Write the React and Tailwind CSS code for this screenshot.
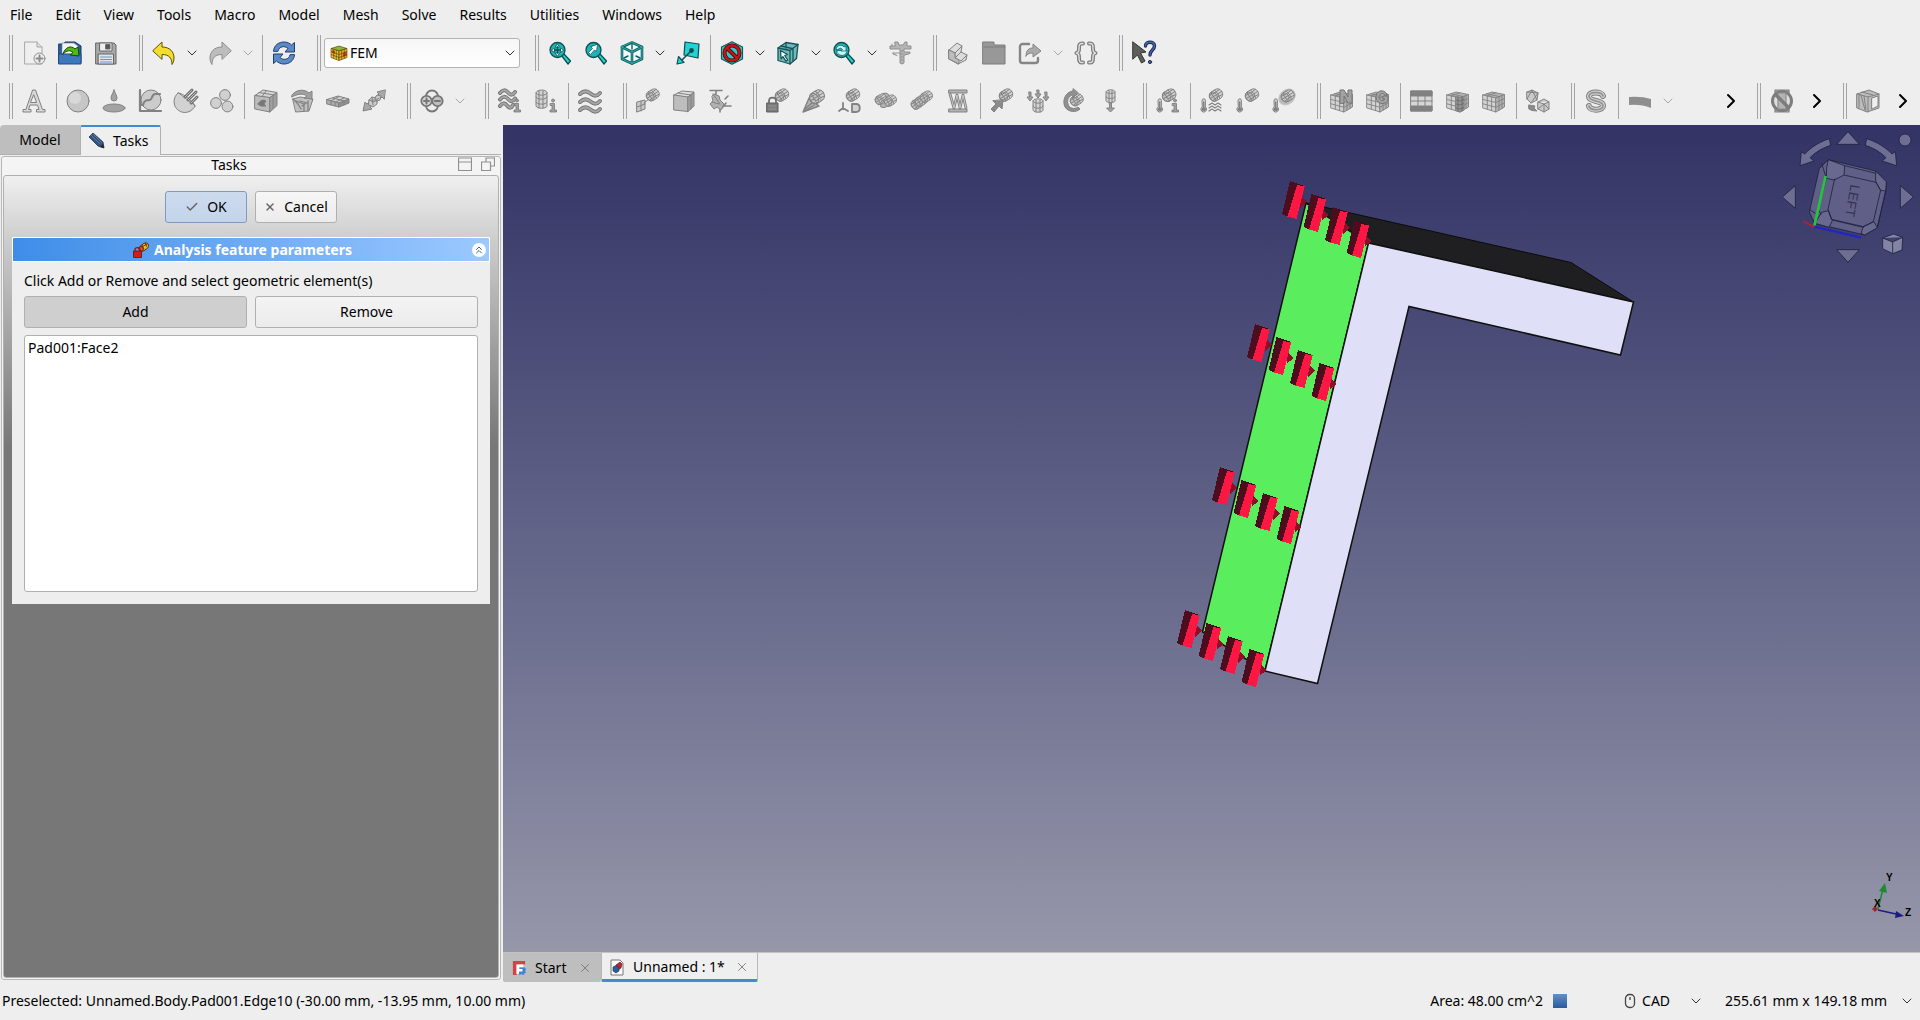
import React, { useState } from "react";
import { ChevronDown, ChevronRight, ChevronsUp, Check, X } from "lucide-react";

const menus = [
  "File",
  "Edit",
  "View",
  "Tools",
  "Macro",
  "Model",
  "Mesh",
  "Solve",
  "Results",
  "Utilities",
  "Windows",
  "Help",
];

const LINE = "#828282";
const LIGHT = "#d2d2d2";
const MID = "#b2b2b2";
const TEAL = "#0f4f50";
const CYAN = "#27cfcf";

const Icon = ({ children, stroke = LINE, fill = "none", width = 1 }) => (
  <svg
    viewBox="0 0 24 24"
    className="size-6 overflow-visible"
    stroke={stroke}
    fill={fill}
    strokeWidth={width}
    strokeLinejoin="round"
    strokeLinecap="round"
    aria-hidden="true"
  >
    {children}
  </svg>
);

/* ---------- shared icon parts ---------- */

// Tilted mesh cylinder used by most of the constraint icons
const Capsule = ({ at = "translate(0 0)", fill = LIGHT, line = LINE }) => (
  <g transform={at}>
    <g transform="rotate(-32 8 6)" stroke={line} strokeWidth="0.9">
      <rect x="1" y="1" width="14" height="10.5" rx="4.8" fill={fill} />
      <ellipse cx="5" cy="6.2" rx="3.8" ry="5" fill={MID} fillOpacity="0.5" />
      <path
        d="M1.500 6.200H14.800M5 1.200V11.200M9.500 1.200Q11.500 6 9.500 11.200M3 3.200Q9 4.200 14 3.200M3 9.200Q9 8.200 14 9.200"
        fill="none"
      />
    </g>
  </g>
);

const Thermometer = () => (
  <g stroke={LINE}>
    <path d="M2 11.500a1.700 1.700 0 0 1 3.400 0V18a2.800 2.800 0 1 1-3.400 0z" fill={LIGHT} />
    <circle cx="3.700" cy="20.200" r="1.600" fill={LINE} />
    <path d="M3.700 13v6" strokeWidth="1.400" />
  </g>
);

// The small "i" badge on the initial-condition icons
const InfoMark = () => (
  <g fill="#a0a0a0" stroke="#777777" strokeWidth="0.8">
    <circle cx="19" cy="11.500" r="1.500" />
    <path d="M16.500 14.500h4V21h2v2h-6.500v-2h2v-4.500h-1.500z" />
  </g>
);

const GridCube = ({ children }) => (
  <g stroke={LINE} strokeWidth="0.9">
    <path d="M1 6 10 3l12.500 2.500L14 9z" fill={MID} />
    <path d="M1 6 14 9v14L1 19z" fill={LIGHT} />
    <path d="M14 9l8.500-3.500V18L14 23z" fill={MID} />
    <path
      d="M1 10.500l13 3 8.500-4M1 14.800l13 3.500 8.500-4.500M5.300 7v13.200M9.600 8v13.600M17 7.800v13.400M20 6.500v13M5 4.700l12.500 3M14 3.700 5.500 7"
      fill="none"
    />
    {children}
  </g>
);

const Magnifier = ({ children }) => (
  <Icon stroke={TEAL} width={1.3}>
    <path d="M13.500 14.500l2-2 7 7.500-2.500 3z" fill={CYAN} />
    <circle cx="9.500" cy="9" r="7.500" fill="#1fb5b8" />
    {children}
  </Icon>
);

const Wave = ({ y, w = 21 }) => (
  <g>
    <path d={`M2 ${y}q${w / 4} -5 ${w / 2} -.5t${w / 2 - 1} -.5`} stroke="#777777" strokeWidth="4" />
    <path d={`M2 ${y}q${w / 4} -5 ${w / 2} -.5t${w / 2 - 1} -.5`} stroke="#a6a6a6" strokeWidth="2" />
  </g>
);

/* ---------- standard toolbar icons ---------- */

const NewIcon = () => (
  <Icon stroke="#a8a8a8">
    <path d="M3 1h12l5 5v17H3z" fill="#efefef" />
    <path d="M15 1v5h5" fill="#dcdcdc" />
    <circle cx="17.500" cy="17.500" r="5.500" fill="#ececec" stroke="#8c8c8c" />
    <path d="M17.500 14.500v6M14.500 17.500h6" stroke="#8c8c8c" strokeWidth="2" />
  </Icon>
);

const OpenIcon = () => (
  <Icon stroke="#173a68">
    <path d="M1 3h5l1-2h10l6 4v17H1z" fill="#275ea4" />
    <path d="M4 5V2h12l4 3v13H4z" fill="#f4f4f4" stroke="#777777" strokeWidth="0.6" />
    <path d="M1 13h22v10H1z" fill="#3d77bd" stroke="#204a87" />
    <path d="M5 13C7 6 13 4 17 8l3-2 1 9-9-1 3-2.500C12 9 9 9 5 13z" fill="#4fba10" stroke="#17450a" />
  </Icon>
);

const SaveIcon = () => (
  <Icon stroke="#666666">
    <path d="M2 2h18l2 2v19H2z" fill="#a9a9a9" />
    <path d="M6 2h12v8H6z" fill="#efefef" />
    <path d="M12 3.500h4V8h-4z" fill="#555555" />
    <path d="M4.500 13h15v10h-15z" fill="#dfe5ec" />
    <path d="M6.500 16h11M6.500 18.500h11M6.500 21h11" stroke="#6e94c4" />
  </Icon>
);

const UndoIcon = () => (
  <Icon stroke="#5c5200" fill="#f5dd2c">
    <path d="M1 9.500 10 1v5c8 0 12 5 12 11 0 3-1 5-2 6.500C20 17 17 13.500 10 13.500V18z" />
  </Icon>
);

const RedoIcon = () => (
  <Icon stroke="#8c8c8c" fill="#bdbdbd">
    <path d="M23 9.500 14 1v5C6 6 2 11 2 17c0 3 1 5 2 6.500C4 17 7 13.500 14 13.500V18z" />
  </Icon>
);

const RefreshIcon = () => (
  <Icon stroke="#1d3f70" fill="#5a8bc8">
    <path d="M1.500 10C2 4 7 1 12 1c3.500 0 6 1.500 7.500 3L22.500 1.500V11H13l3-3.500c-3-3-9-2.500-10 2.500z" />
    <path d="M22.500 14c-.5 6-5.500 9-10.500 9-3.500 0-6-1.500-7.500-3l-3 2.500V13H11l-3 3.500c3 3 9 2.500 10-2.500z" />
  </Icon>
);

const ZoomFitIcon = () => (
  <Magnifier>
    <path d="M9.500 3l2 3h-4zM9.500 15l2-3h-4zM3.500 9l3-2v4zM15.500 9l-3-2v4z" fill="#e8ffff" strokeWidth="0.7" />
    <path d="M9.500 6v6M6.500 9h6" />
  </Magnifier>
);

const ZoomSelectIcon = () => (
  <Magnifier>
    <path d="M13.500 3.500l-1 7-2-1.500-4 4.500-2-2 4-4-1.500-1.500z" fill="#ffffff" strokeWidth="0.7" />
  </Magnifier>
);

const ZoomRefreshIcon = () => (
  <Magnifier>
    <path d="M4 8c1-4 6-5 8-2l2-1v5h-5l1.500-1.500C9 6.500 7 7 6 8.500zM15 10c-1 5-6 5.500-8.500 3L5 14v-4.500h4" fill="#c8f6f6" strokeWidth="0.7" />
  </Magnifier>
);

const IsoIcon = () => (
  <Icon stroke="#0f5f61" width={2.6}>
    <path d="M12 1.500l10 4.500v12l-10 4.500L2 18V6z" fill="#f3fbfb" />
    <path d="M2 6l10 5 10-5M12 11v11.500" />
    <path d="M12 1.500l10 4.500v12l-10 4.500L2 18V6zM2 6l10 5 10-5M12 11v11.500" stroke="#2fb4b4" strokeWidth="0.9" />
    <path d="M12 3v5M4 17l4-2M20 17l-4-2" strokeWidth="1.400" />
  </Icon>
);

const AlignViewIcon = () => (
  <Icon stroke={TEAL} width={1.2}>
    <path d="M9 1l14 2-1 14-14-3z" fill="#22d3d3" />
    <path d="M16 9 6 19" strokeWidth="1.500" />
    <path d="M1 23l1.500-7.500L8 21.500z" fill={CYAN} />
    <circle cx="15.500" cy="9.500" r="1.800" fill={TEAL} />
  </Icon>
);

const NoSelectIcon = () => (
  <Icon stroke="#155a5c" width={1.2}>
    <path d="M12 0.800l10.500 5.200v12L12 23.200 1.500 18V6z" fill="#2fc9cb" />
    <circle cx="12" cy="12" r="7.500" stroke="#4a0a0a" strokeWidth="4" />
    <path d="M7 7l10 10" stroke="#4a0a0a" strokeWidth="4" />
    <circle cx="12" cy="12" r="7.500" stroke="#c81414" strokeWidth="2.400" />
    <path d="M7 7l10 10" stroke="#c81414" strokeWidth="2.400" />
  </Icon>
);

const BoxSelectIcon = () => (
  <Icon stroke="#175457" width={1.3}>
    <path d="M2 7l8-5.500 12 2-1.500 14L14 23 2 19.500z" fill="#6fb9bb" />
    <path d="M2 7l12 2.500L22 3.500M14 9.500V23M10 2v5M5 5l11 2.500M17 8v12" />
    <path d="M4.500 9.500l7 4-2.800 1 3 4.500-1.800 1.200-3-4.500-1.800 2z" fill="#ffffff" />
  </Icon>
);

const CaliperIcon = () => (
  <Icon fill="#b5b5b5" stroke="#909090">
    <path d="M7 1h3l1 3h4l2-3h2v4h4v3h-7v3h6v1.500l-5 1.500h-1v8l-2 1-2-1V8H2V5h5z" />
    <path d="M5 12h7M5 12v1l4 1.500M4 3v2M13 10h2M13 13h2M13 16h2M13 19h2" />
  </Icon>
);

const PartIcon = () => (
  <Icon fill="#dddddd">
    <path d="M3 9l8-7 5 3-1 6 6 3-1 5-8 4-9-5z" />
    <path d="M3 9l6 3 7-7M9 12v5l6 3 6-6M9 17l6-6M12 23v-4" fill="none" />
    <path d="M3 9l6 3v5l4 2v4l-10-5z" fill="#bdbdbd" />
  </Icon>
);

const FolderIcon = () => (
  <Icon stroke="#7d7d7d" fill="#989898">
    <path d="M1 1h11v3h11v19H1z" />
    <path d="M2 6h21" />
  </Icon>
);

const LinkIcon = () => (
  <Icon stroke="#858585" width={2.4}>
    <path d="M11 3H4.500A2.500 2.500 0 0 0 2 5.500v14A2.500 2.500 0 0 0 4.500 22h13a2.500 2.500 0 0 0 2.500-2.500V17" />
    <path d="M8 15c0-6 3-8 7-8V3l8 7-8 6v-4c-3 0-5 .5-7 3z" strokeWidth="1" fill="#aaaaaa" />
  </Icon>
);

const BracesIcon = () => (
  <Icon stroke="#7c7c7c">
    <path d="M9 2.500C5.500 2 5 4 5 7s0 4-2.500 5C5 13 5 14 5 17s.5 5 4 4.500M15 2.500c3.500-.5 4 1.500 4 4.500s0 4 2.500 5c-2.500 1-2.500 2-2.500 5s-.5 5-4 4.500" strokeWidth="4" />
    <path d="M9 2.500C5.500 2 5 4 5 7s0 4-2.500 5C5 13 5 14 5 17s.5 5 4 4.500M15 2.500c3.500-.5 4 1.500 4 4.500s0 4 2.500 5c-2.500 1-2.500 2-2.500 5s-.5 5-4 4.500" stroke="#e0e0e0" strokeWidth="1.400" />
  </Icon>
);

const WhatsThisIcon = () => (
  <Icon stroke="#333333">
    <path d="M1 1l13 10-5.500 1 4.500 8-3.500 2-4-8L1 18z" fill="#5d6058" />
    <path d="M13.500 5c0-5 9-5 9 0 0 4-4.500 4-4.500 9" stroke="#1d2a52" strokeWidth="3.400" />
    <path d="M13.500 5c0-5 9-5 9 0 0 4-4.500 4-4.500 9" stroke="#4468ad" strokeWidth="1.400" />
    <circle cx="18" cy="21" r="1.600" fill="#4468ad" stroke="#1d2a52" />
  </Icon>
);

/* ---------- FEM toolbar icons ---------- */

const AnalysisIcon = () => (
  <Icon stroke="#808080" fill="#d9d9d9">
    <path d="M11 1h2.500l7 19.500H23V23h-8.500v-2.500H17L15.500 16H8l-1.500 4.500H9V23H1v-2.500h2.500zM8.800 13.500h5.800L11.800 6z" />
  </Icon>
);

const SolidMaterialIcon = () => (
  <Icon>
    <circle cx="12" cy="12" r="11" fill="#c6c6c6" />
    <circle cx="9" cy="9" r="6" fill="#d8d8d8" stroke="none" />
  </Icon>
);

const FluidMaterialIcon = () => (
  <Icon fill="#a3a3a3">
    <ellipse cx="12" cy="19" rx="11" ry="4" />
    <path d="M12 1c1 3.500 3 5.500 3 8a3 3 0 0 1-6 0c0-2.500 2-4.500 3-8z" />
  </Icon>
);

const NonlinearIcon = () => (
  <Icon>
    <circle cx="13" cy="11" r="10" fill="#cccccc" />
    <path d="M2 1v21h21" strokeWidth="2.200" />
    <path d="M2 16h3c1-5 4-5 7-5 2 0 2-6 5-6h5" strokeWidth="2.200" />
  </Icon>
);

const ReinforcedIcon = () => (
  <Icon>
    <path d="M4 4a11 11 0 1 0 17 13z" fill="#d2d2d2" />
    <path d="M4 4c5 0 15 8 17 13" />
    <path d="M11 8l7-7M14 11l8-8M17 14l6-6" strokeWidth="3" stroke="#707070" />
    <path d="M11 8l7-7M14 11l8-8M17 14l6-6" stroke="#bcbcbc" />
  </Icon>
);

const MaterialEditorIcon = () => (
  <Icon fill="#d0d0d0">
    <circle cx="15" cy="6" r="5.400" />
    <circle cx="6" cy="14" r="5.400" />
    <circle cx="17.500" cy="17.500" r="5.400" />
  </Icon>
);

const SectionBox = () => (
  <Icon>
    <path d="M1 6.500l8-5.500 14 2.500-7 5z" fill="#d5d5d5" />
    <path d="M1 6.500l15 2v14.500L1 20z" fill="#bcbcbc" />
    <path d="M16 8.500l7-5v13l-7 6.500z" fill="#a0a0a0" />
    <path d="M5 3.500l15 2.500M19 7v12M12 2 8 7.500" />
    <path d="M4 15c2-4 6-5 8-3l-2 3 2 2c-3 0-6 1-8-2z" fill="#777777" />
  </Icon>
);

const SectionFluid = () => (
  <Icon>
    <path d="M3 10l7-2 13 2-4 12-13 1z" fill="#c0c0c0" />
    <path d="M2 6C6 0 15 0 19 4l3-2v8l-8-1 3-2C13 4 7 5 2 8z" fill="#a0a0a0" />
    <path d="M10 12l7 2M18 12v10M8 15l3 5M6 12l8 3v7M3 10l5 5M12 17l4-3" strokeWidth="1.300" />
  </Icon>
);

const ShellIcon = () => (
  <Icon>
    <path d="M1 10.500l11-3.500 11 3-10 4z" fill="#d0d0d0" />
    <path d="M1 10.500l12 3.500v4L1 15z" fill="#aaaaaa" />
    <path d="M13 14l10-4v4l-10 4z" fill="#909090" />
    <path d="M7 9l11 3M13 7.500 5 12M18 9l-8 4M5 12v4M9 13v4M18 12v4" />
  </Icon>
);

const BeamIcon = () => (
  <Icon fill="#a8a8a8">
    <path d="M23 1l-8 2 2 2-12 10-2-2-2 9 9-2-2-2L20 8l2 2z" />
    <path d="M7 11l3-3 3 1 2-3 4 1-1 4-3 1v3l-4 3-4-2z" fill="#cccccc" />
    <path d="M10 8l1 8M13 9l2 4M7 11l5 2 5-4" />
  </Icon>
);

const ElectroIcon = () => (
  <Icon stroke="#777777" width={1.8}>
    <circle cx="12" cy="7.500" r="6" />
    <circle cx="12" cy="16.500" r="6" />
    <circle cx="6.500" cy="12" r="5.200" fill="#d4d4d4" />
    <circle cx="17.500" cy="12" r="5.200" fill="#c0c0c0" />
    <path d="M4 12h5M6.500 9.500v5M15 12h5" strokeWidth="2" />
  </Icon>
);

const FlowInitIcon = () => (
  <Icon>
    <Wave y={4} w={16} />
    <Wave y={10.5} w={16} />
    <Wave y={17} w={14} />
    <InfoMark />
  </Icon>
);

const PressureInitIcon = () => (
  <Icon>
    <path d="M2 4c0-4 11-4 11 0v13c0 3-11 3-11 0z" fill={LIGHT} />
    <path d="M2 4c0 3 11 3 11 0M2 8c0 3 11 3 11 0M2 13c0 3 11 3 11 0M5 2v17M9 2v17" />
    <InfoMark />
  </Icon>
);

const FlowVelocityIcon = () => (
  <Icon>
    <Wave y={5} />
    <Wave y={13} />
    <Wave y={21} />
  </Icon>
);

const PlaneRotationIcon = () => (
  <Icon>
    <path d="M1 13l8-2v9l-8 3z" fill="#c8c8c8" />
    <path d="M5 12v10M1 18l8-3M8 14l5-4" />
    <Capsule at="translate(9 0) scale(0.95)" />
  </Icon>
);

const SectionPrintIcon = () => (
  <Icon>
    <path d="M2 6l8-4 12 1-6 5z" fill="#dedede" />
    <path d="M2 6l14 2v14.500L2 21z" fill="#bdbdbd" />
    <path d="M16 8l6-5v14l-6 5.500z" fill="#9d9d9d" />
    <path d="M6 4l13 2v14" />
  </Icon>
);

const TransformIcon = () => (
  <Icon width={1.6}>
    <path d="M2 1.500h12M8 1.500v4M12 14v9M12 17h11M18 14l-4 5M20 7l-3 3" />
    <path d="M6 5l5 2 1 4 4 4-3 6-4-3-3 2-4-5 3-3-1-4z" fill={MID} strokeWidth="1" />
    <path d="M5 5l7 10M4 13l7 2" strokeWidth="1" />
  </Icon>
);

const FixedIcon = () => (
  <Icon>
    <Capsule at="translate(8 0) scale(0.98)" />
    <path d="M1 14h11v9H1z" fill="#7b7b7b" stroke="#5f5f5f" />
    <path d="M3 14v-2c0-4.500 7-4.500 7 0v2" strokeWidth="1.800" stroke="#6e6e6e" />
    <path d="M3 17h7M3 20h7" stroke="#999999" />
  </Icon>
);

const RigidBodyIcon = () => (
  <Icon>
    <path d="M1 23L7 9l10 8zM3 20l8-7M1 23l11-7" fill={MID} strokeWidth="1.400" />
    <Capsule at="translate(6 1) scale(1.1)" />
  </Icon>
);

const DisplacementIcon = () => (
  <Icon>
    <Capsule at="translate(7 0) scale(0.98)" />
    <path d="M5 14v5l-4 3M5 19l5 3" strokeWidth="1.800" />
    <path d="M14 15h4c5 0 5 8 0 8h-4z" strokeWidth="1.800" fill={LIGHT} />
  </Icon>
);

const ContactIcon = () => (
  <Icon>
    <path d="M8 5c6-3 9 2 8 7s-5 8-9 6z" fill={MID} />
    <Capsule at="translate(0 5) scale(0.85)" />
    <Capsule at="translate(9 6) scale(0.9)" />
  </Icon>
);

const TieIcon = () => (
  <Icon>
    <Capsule at="translate(0 9) scale(0.9)" />
    <Capsule at="translate(4 6) scale(0.9)" />
    <Capsule at="translate(9 2) scale(0.9)" />
  </Icon>
);

const SpringIcon = () => (
  <Icon fill="#b2b2b2">
    <path d="M3 1h18v3H3zM3 20h18v3H3z" />
    <path d="M4 5l4 14 3-13 3 13 3-13 3 13" fill="none" strokeWidth="2.800" />
    <path d="M4 5l4 14 3-13 3 13 3-13 3 13" fill="none" stroke="#c8c8c8" />
  </Icon>
);

const ForceIcon = () => (
  <Icon>
    <Capsule at="translate(8 0) scale(0.98)" />
    <path d="M13 11l-1 9-3-3-5 6-3-3 5-5-3-3z" fill="#8a8a8a" />
  </Icon>
);

const PressureIcon = () => (
  <Icon>
    <path d="M7 12c0-3 10-3 10 0v9c0 3-10 3-10 0z" fill={LIGHT} />
    <path d="M7 12c0 3 10 3 10 0M7 17c0 3 10 3 10 0M10 11v12M14 11v12" />
    <path d="M3 3h2v5h2l-3 4-3-4h2zM11 1h2v4h2l-3 4-3-4h2zM19 3h2v5h2l-3 4-3-4h2z" fill="#a0a0a0" />
  </Icon>
);

const CentrifIcon = () => (
  <Icon>
    <Capsule at="translate(7 5) scale(0.95)" />
    <path d="M11 0v2C3 3 0 12 3 18c3 5 11 6 15 2l-2-2c-4 3-9 1-10-3s0-8 5-9v3l5-5z" fill="#909090" />
  </Icon>
);

const GravityIcon = () => (
  <Icon>
    <path d="M8 3c0-3 9-3 9 0v9c0 2-9 2-9 0z" fill={LIGHT} />
    <path d="M8 3c0 2 9 2 9 0M8 8c0 2 9 2 9 0M11 2v11M14 2v11" />
    <path d="M11.500 14h2v5h3l-4 4-4-4h3z" fill="#a0a0a0" />
  </Icon>
);

const InitTempIcon = () => (
  <Icon>
    <Capsule at="translate(5 0)" />
    <Thermometer />
    <InfoMark />
  </Icon>
);

const HeatFluxIcon = () => (
  <Icon>
    <Capsule at="translate(8 0) scale(0.98)" />
    <Thermometer />
    <path d="M9 16l3-2 3 2 3-2 3 2M9 19l3-2 3 2 3-2 3 2M9 22l3-2 3 2 3-2 3 2" strokeWidth="1.200" />
  </Icon>
);

const TempIcon = () => (
  <Icon>
    <Capsule at="translate(8 0) scale(0.98)" />
    <Thermometer />
  </Icon>
);

const HeatSourceIcon = () => (
  <Icon>
    <ellipse cx="15" cy="8" rx="9" ry="7" transform="rotate(-40 15 8)" fill="#b9b9b9" stroke="#c5c5c5" />
    <Capsule at="translate(8 1) scale(0.95)" />
    <Thermometer />
  </Icon>
);

const NetgenIcon = () => (
  <Icon>
    <GridCube />
    <path d="M10 14V1h4l4 7V1h4v13h-4l-4-7v7z" fill="#a2a2a2" stroke="#747474" />
  </Icon>
);

const GmshIcon = () => (
  <Icon>
    <GridCube />
    <path d="M21 5c-4-6-11-3-11 3s7 9 12 4V7h-5v3h2c-2 3-6 1-6-2s4-5 6-2z" fill="#a2a2a2" stroke="#747474" />
  </Icon>
);

const MeshLayerIcon = () => (
  <Icon>
    <path d="M1 2h21v20H1z" fill="#d6d6d6" />
    <path d="M1 2h21v5H1zM1 17h21v5H1z" fill="#808080" />
    <path d="M8 2v20M15 2v20M1 12h21M1 4.500h21M1 19.500h21" />
  </Icon>
);

const MeshRegionIcon = () => (
  <Icon>
    <GridCube>
      <path d="M10 7.500l4 1 4-1.500v14L14 23l-4-1.200z" fill="#959595" />
      <path d="M10 11l4 1 4-1.500M10 15l4 1 4-1.500M10 19l4 1 4-1.500M12 8v14M16 8v14" stroke="#6b6b6b" />
    </GridCube>
  </Icon>
);

const MeshGroupIcon = () => (
  <Icon>
    <GridCube />
  </Icon>
);

const FemToMeshIcon = () => (
  <Icon fill="#cacaca">
    <path d="M1 3l5-2 6 3-1 7-6 3-4-4zM1 3l11 1M1 10l5-9 5 10M12 4 5 14" />
    <path d="M12 13l6-3 5 3v7l-5 3-6-3zM12 13l6 2 5-2M18 15v8M12 20l6-5 5 5" />
    <path d="M3 16l6 1-1 2 3 3-5-.500-3-1.500z" fill="#8b8b8b" />
  </Icon>
);

const SolverIcon = () => (
  <Icon stroke="#808080" width={6}>
    <path d="M19 7C18 2.500 5 2 5 7.500S19 11 19 16.500 6 22 5 17" />
    <path d="M19 7C18 2.500 5 2 5 7.500S19 11 19 16.500 6 22 5 17" stroke="#cfcfcf" strokeWidth="4" />
    <path d="M19 7C18 2.500 5 2 5 7.500S19 11 19 16.500 6 22 5 17" stroke="#909090" strokeWidth="1.600" />
  </Icon>
);

const EquationIcon = () => (
  <Icon stroke="none" fill="#8e8e8e">
    <path d="M1 8q12-1 22 2v9q-10-4-22-3z" />
  </Icon>
);

const ClipFilterIcon = () => (
  <Icon width={1.2}>
    <path d="M5 1h14v22H5z" fill="#a8a8a8" />
    <circle cx="12" cy="12" r="9.500" stroke="#7d7d7d" strokeWidth="3" fill="#dedede" />
    <path d="M8 4h8v16H8z" fill="#b4b4b4" stroke="#8d8d8d" />
    <path d="M5.500 5.500l13 13" stroke="#7d7d7d" strokeWidth="3.400" />
  </Icon>
);

const ResultBoxIcon = () => (
  <Icon fill="#bcbcbc">
    <path d="M1 5l12-4 10 4v14l-12 4L1 19z" />
    <path d="M1 5l11 3 11-3M12 8v15M5 6l4 15M3 6v13M8 7l2 14M6 3l11 3" />
    <path d="M16 9l6-2v10l-6 3z" fill="#efefef" />
  </Icon>
);

/* ---------- toolbar building blocks ---------- */

const Handle = ({ first }) => (
  <div
    className={`h-9 w-1 shrink-0 border-x border-[#a4a4a4] mr-[3px] ${
      first ? "ml-[9px]" : "ml-[15px]"
    }`}
  />
);

const Separator = () => <div className="ml-[4px] mr-[3px] h-9 w-px shrink-0 bg-[#a4a4a4]" />;

const Tool = ({ label, icon: IconEl, menu, disabled }) => (
  <div className="flex shrink-0 items-center">
    <button
      type="button"
      aria-label={label}
      disabled={disabled}
      className="flex size-9 items-center justify-center"
    >
      <IconEl />
    </button>
    {menu && (
      <button
        type="button"
        aria-label={`${label} options`}
        disabled={disabled}
        className={`flex h-9 w-5 items-center justify-center ${
          disabled ? "text-[#a8a8a8]" : "text-[#333333]"
        }`}
      >
        <ChevronDown className="size-4" strokeWidth={1.5} />
      </button>
    )}
  </div>
);

const More = () => (
  <button
    type="button"
    aria-label="More tools"
    className="flex h-9 w-[34px] shrink-0 items-center justify-center text-black"
  >
    <ChevronRight className="size-6" strokeWidth={2} />
  </button>
);

const femGroups = [
  [
    ["Analysis container", AnalysisIcon],
    null,
    ["Solid material", SolidMaterialIcon],
    ["Fluid material", FluidMaterialIcon],
    ["Nonlinear material", NonlinearIcon],
    ["Reinforced material", ReinforcedIcon],
    ["Material editor", MaterialEditorIcon],
    null,
    ["Beam cross section", SectionBox],
    ["Beam rotation", SectionFluid],
    ["Shell plate thickness", ShellIcon],
    ["Fluid section", BeamIcon],
  ],
  [["Electromagnetic boundary conditions", ElectroIcon, true]],
  [
    ["Initial flow velocity", FlowInitIcon],
    ["Initial pressure", PressureInitIcon],
    null,
    ["Flow velocity", FlowVelocityIcon],
  ],
  [
    ["Plane multi-point constraint", PlaneRotationIcon],
    ["Section print", SectionPrintIcon],
    ["Local coordinate system", TransformIcon],
  ],
  [
    ["Fixed boundary condition", FixedIcon],
    ["Rigid body", RigidBodyIcon],
    ["Displacement", DisplacementIcon],
    ["Contact", ContactIcon],
    ["Tie", TieIcon],
    ["Spring", SpringIcon],
    null,
    ["Force load", ForceIcon],
    ["Pressure load", PressureIcon],
    ["Centrifugal load", CentrifIcon],
    ["Gravity load", GravityIcon],
  ],
  [
    ["Initial temperature", InitTempIcon],
    null,
    ["Heat flux load", HeatFluxIcon],
    ["Temperature", TempIcon],
    ["Body heat source", HeatSourceIcon],
  ],
  [
    ["Mesh from shape by Netgen", NetgenIcon],
    ["Mesh from shape by Gmsh", GmshIcon],
    null,
    ["Mesh boundary layer", MeshLayerIcon],
    ["Mesh refinement", MeshRegionIcon],
    ["Mesh group", MeshGroupIcon],
    null,
    ["FEM mesh to mesh", FemToMeshIcon],
  ],
  [
    ["Solver CalculiX", SolverIcon],
    null,
    ["Mechanical equations", EquationIcon, true],
  ],
];

/* ---------- 3D view ---------- */

const markerRows = [
  [1290, 181],
  [1255, 324],
  [1220, 467],
  [1185, 610],
];

const Marker = ({ x, y }) => (
  <g transform={`translate(${x} ${y})`} shapeRendering="crispEdges">
    <path d="M11 15l6 6-7 6z" fill="#8c1029" />
    <path d="M0 0l14.500 5-2 3-12-2z" fill="#3a0b17" />
    <path d="M0 0l8 4-9.500 32-6.500-3z" fill="#4d0d1e" />
    <path d="M7 4l7.500 1.500-8 32.500-9-2.500z" fill="#ff1744" />
  </g>
);

const Scene = () => (
  <svg viewBox="503 125 1417 827" className="block size-full" aria-label="3D model">
    <path d="M1306 203L1571 262.500 1633.500 302 1368.500 243z" fill="#1f1f21" stroke="#0b0b0b" />
    <path d="M1306 203l62.500 40L1265 671l-62.500-39z" fill="#5aee5e" stroke="#101010" strokeWidth="1.500" />
    <path
      d="M1368.500 243l265 59-13 53-211.500-48.500-91.500 377-52.500-12.500z"
      fill="#dfdff8"
      stroke="#101010"
      strokeWidth="1.500"
    />
    {markerRows.map(([x, y]) =>
      [0, 1, 2, 3].map((i) => (
        <Marker key={`${x}-${i}`} x={x + i * 21.5} y={y + i * 13} />
      ))
    )}
  </svg>
);

const NavCube = () => (
  <svg
    viewBox="0 15 480 465"
    className="absolute right-0 top-0 h-[155px] w-[160px]"
    fill="#6e6e94"
    stroke="#20203c"
    strokeWidth="2.500"
    aria-label="Navigation cube"
  >
    <path d="M264 35l34 38h-68zM264 427l34-38h-68zM67 231l39-34v68zM460 231l-39-34v68z" />
    <circle cx="435" cy="60" r="18" />
    <path d="M208 56l4 20c-25 8-45 20-62 37l12 10-42 14 4-42 10 7c20-21 45-37 74-46z" />
    <path d="M320 56l-4 20c25 8 45 20 62 37l-12 10 44 14-4-42-10 7c-20-21-47-37-76-46z" />
    <path d="M205 119l142 34 32 32-2 28-25 110-38 22-150-35-16-34 30-130z" fill="#5f5f88" />
    <path d="M205 119l49 18-2 28-29 15-24-5 1-32zM347 153l32 32-2 28-15-2-15-27zM205 272l-20 5-20 33 42 12 10-20zM314 345l38-22-10-18-32 15-7 20z" fill="#69698f" />
    <path d="M254 137l94 23M252 165l96 22 14 24-22 94-30 15-96-22-10-30 20-92M185 130l14 45-25 93 10 15M377 213l-25 110M150 270l16 10M217 300l93 22" fill="none" />
    <text
      transform="translate(272 192) rotate(100)"
      fontSize="40"
      fill="#33334f"
      stroke="none"
      fontFamily="Liberation Sans, sans-serif"
    >
      LEFT
    </text>
    <path d="M197 168l-34 150" stroke="#21c63c" strokeWidth="8" fill="none" />
    <path d="M163 320l140 33" stroke="#2424c4" strokeWidth="7" fill="none" />
    <path d="M130 304l33 17" stroke="#a8233e" strokeWidth="6" fill="none" />
    <path d="M368 354l33-12 27 10-2 38-28 11-30-15zM368 354l30 12 30-14M398 366v35" fill="#8383a5" />
  </svg>
);

const AxisCross = () => (
  <svg
    viewBox="0 0 52 64"
    className="absolute bottom-[22px] right-0 h-16 w-[52px]"
    fontFamily="Liberation Sans, sans-serif"
    fontSize="10"
    fontWeight="700"
    aria-label="Axis cross"
  >
    <path d="M10 43l5-20" stroke="#1f8a33" strokeWidth="1.500" />
    <path d="M17 17l2 10-8-2z" fill="#1f8a33" />
    <path d="M10 44l18 4" stroke="#1c1c84" strokeWidth="1.500" />
    <path d="M36 50l-9 2 1-7z" fill="#1c1c84" />
    <path d="M7 40l3 3-3 3-3-3z" fill="#a12433" />
    <text x="18" y="15">Y</text>
    <text x="6" y="41">X</text>
    <text x="37" y="50">Z</text>
  </svg>
);

/* ---------- small coloured icons ---------- */

const FemIcon = () => (
  <svg viewBox="0 0 18 16" className="h-4 w-[18px]" stroke="#4a3a05" strokeWidth="0.6" aria-hidden="true">
    <path d="M1 3.500L9 1l8 2.500L9 6z" fill="#8fb23a" />
    <path d="M1 3.500L9 6v9.500L1 12.500z" fill="#efc32a" />
    <path d="M9 6l8-2.500v9L9 15.500z" fill="#e8b322" />
    <path d="M2 5l3 1v3L2 8zM13 8l4-1.500v4L13 12z" fill="#e0401e" stroke="none" />
    <path d="M1 6.500l8 3 8-3M1 9.500l8 3 8-3M3.700 4.500v9M6.300 5v9.500M11.700 5v9.500M14.300 4.500v9" fill="none" />
  </svg>
);

const PencilIcon = () => (
  <svg viewBox="0 0 16 16" className="size-4" aria-hidden="true">
    <path d="M4 0l10 9 1 6-6-2L0 4z" fill="#34547c" stroke="#20344f" strokeWidth="0.8" />
    <path d="M2 2l9 9M4 1l9 9" stroke="#5f82ad" strokeWidth="0.8" />
    <path d="M14 11l1 4-4-1z" fill="#222222" />
  </svg>
);

const FixedColorIcon = () => (
  <svg viewBox="0 0 16 16" className="size-4" stroke="#5b1606" strokeWidth="0.8" aria-hidden="true">
    <rect x="6" y="2" width="10" height="6" rx="3" transform="rotate(-35 11 5)" fill="#e8c221" />
    <path d="M9 3l2 4M12 1l2 4M7 6l7-4" fill="none" />
    <rect x="6" y="4.500" width="4" height="5" rx="2" transform="rotate(-35 8 7)" fill="#e05a1c" />
    <path d="M2 9V7.500C2 5 7 5 7 7.500V9" fill="none" stroke="#a30f10" strokeWidth="1.300" />
    <path d="M0.500 9h8v6.500h-8z" fill="#d31a1c" />
  </svg>
);

const StartIcon = () => (
  <svg viewBox="0 0 16 18" className="h-4 w-[14px]" aria-hidden="true">
    <path d="M1 1h14v4H6v12H1z" fill="#d6404b" />
    <path d="M9 8h5l2 2-1 2 1 2-2 1v2l-3-1-4 1z" fill="#3f83d6" />
    <path d="M5 5h8v3H8v2h4v3H8v3H5z" fill="#ffffff" />
  </svg>
);

const DocumentIcon = () => (
  <svg viewBox="0 0 14 17" className="h-[17px] w-[14px]" aria-hidden="true">
    <path d="M1 1h9l3 3v12H1z" fill="#fbfbfb" stroke="#777777" />
    <path d="M6 6l4-3 2 2-1 4-3 2z" fill="#c4212f" stroke="#5c0f16" strokeWidth="0.600" />
    <path d="M3 8l3-1.500 3 2V12l-3 2-3-2z" fill="#2c5f99" stroke="#122c4d" strokeWidth="0.600" />
  </svg>
);

/* ---------- page sections ---------- */

const MenuBar = () => (
  <nav className="flex h-[29px] items-center gap-[23px] pl-[10px]">
    {menus.map((m) => (
      <button key={m} type="button">
        {m}
      </button>
    ))}
  </nav>
);

const StandardToolbar = () => (
  <div className="flex h-12 items-center overflow-hidden">
    <Handle first />
    <Tool label="New" icon={NewIcon} />
    <Tool label="Open" icon={OpenIcon} />
    <Tool label="Save" icon={SaveIcon} />
    <Handle />
    <Tool label="Undo" icon={UndoIcon} menu />
    <Tool label="Redo" icon={RedoIcon} menu disabled />
    <Separator />
    <Tool label="Refresh" icon={RefreshIcon} />
    <Handle />
    <div className="relative w-[196px] shrink-0">
      <select
        aria-label="Workbench"
        className="h-[30px] w-full appearance-none rounded-[3px] border border-[#b4b4b4] bg-linear-to-b from-[#f6f6f6] to-white pl-[25px]"
      >
        <option>FEM</option>
      </select>
      <span className="pointer-events-none absolute inset-y-0 left-[6px] flex items-center">
        <FemIcon />
      </span>
      <ChevronDown
        className="pointer-events-none absolute right-[2px] top-[7px] size-4 text-[#333333]"
        strokeWidth={1.5}
      />
    </div>
    <Handle />
    <Tool label="Fit all" icon={ZoomFitIcon} />
    <Tool label="Fit selection" icon={ZoomSelectIcon} />
    <Tool label="Isometric" icon={IsoIcon} menu />
    <Tool label="Align to selection" icon={AlignViewIcon} />
    <Separator />
    <Tool label="Selection filter" icon={NoSelectIcon} menu />
    <Tool label="Box selection" icon={BoxSelectIcon} menu />
    <Tool label="Selection view" icon={ZoomRefreshIcon} menu />
    <Tool label="Measure" icon={CaliperIcon} disabled />
    <Handle />
    <Tool label="Create part" icon={PartIcon} disabled />
    <Tool label="Create group" icon={FolderIcon} disabled />
    <Tool label="Make link" icon={LinkIcon} menu disabled />
    <Tool label="Create variable set" icon={BracesIcon} disabled />
    <Handle />
    <Tool label="What's this?" icon={WhatsThisIcon} />
  </div>
);

const FemToolbar = () => (
  <div className="flex h-12 items-center">
    <div className="flex min-w-0 flex-1 items-center overflow-hidden">
      {femGroups.map((group, g) => (
        <React.Fragment key={g}>
          <Handle first={g === 0} />
          {group.map((tool, i) =>
            tool ? (
              <Tool key={tool[0]} label={tool[0]} icon={tool[1]} menu={tool[2]} disabled />
            ) : (
              <Separator key={i} />
            )
          )}
        </React.Fragment>
      ))}
    </div>
    <More />
    <div className="-ml-[6px] flex items-center">
      <Handle />
      <Tool label="Clipping filter" icon={ClipFilterIcon} disabled />
      <More />
    </div>
    <div className="-ml-[6px] flex items-center">
      <Handle />
      <Tool label="Clip region" icon={ResultBoxIcon} disabled />
      <More />
    </div>
  </div>
);

const TaskPanel = () => {
  const [mode, setMode] = useState("Add");
  const [open, setOpen] = useState(true);

  return (
    <aside className="flex w-[503px] shrink-0 flex-col pb-[2px] pr-[2px]">
      {/* Tabs */}
      <div className="flex h-[30px] border-b border-[#b0b0b0]">
        <button type="button" className="w-20 rounded-tl bg-[#bebebe]">
          Model
        </button>
        <button
          type="button"
          className="-mb-px flex w-[81px] items-center gap-2 rounded-t-[2px] border-x border-t-2 border-x-[#b0b0b0] border-t-[#4488d8] bg-[#efefef] pl-2"
        >
          <PencilIcon />
          Tasks
        </button>
      </div>

      <section className="ml-px mt-px flex flex-1 flex-col rounded-[3px] border border-[#b8b8b8] bg-[#f4f4f4] px-px pb-px">
        <header className="flex h-[18px] items-start gap-[9px] pr-[4px]">
          <h2 className="flex-1 pl-[6px] text-center leading-4">Tasks</h2>
          <button type="button" aria-label="Collapse panel" className="text-[#909090]">
            <svg viewBox="0 0 14 14" className="size-[14px]" fill="none" stroke="currentColor" strokeWidth="1.200">
              <path d="M.500 1h13v12.500H.500zM.500 5h13" />
            </svg>
          </button>
          <button type="button" aria-label="Float panel" className="text-[#909090]">
            <svg viewBox="0 0 14 14" className="size-[14px]" fill="none" stroke="currentColor" strokeWidth="1.200">
              <path d="M5 5V1h8.500v8H9.500M.500 5h9v8.500h-9z" />
            </svg>
          </button>
        </header>

        <div className="flex-1 rounded-[3px] border border-[#b0b0b0] bg-linear-to-b from-[#f0f0f0] from-0% via-[#cdcdcd] via-[64px] to-[#777777] to-[270px] px-[8px] pt-[15px]">
          <div className="flex justify-center gap-2">
            <button
              type="button"
              className="flex h-8 w-[82px] items-center justify-center gap-2 rounded-[3px] border border-[#8099bd] bg-linear-to-b from-[#cddbee] to-[#c3d4ea]"
            >
              <Check className="size-[14px] text-[#666666]" strokeWidth={2.5} />
              OK
            </button>
            <button
              type="button"
              className="flex h-8 w-[82px] items-center justify-center gap-2 rounded-[3px] border border-[#b0b0b0] bg-linear-to-b from-[#f6f6f6] to-[#ececec]"
            >
              <X className="size-3 text-[#666666]" strokeWidth={3} />
              Cancel
            </button>
          </div>

          <div className="mt-[14px] bg-[#eeeeee]">
            <button
              type="button"
              aria-expanded={open}
              onClick={() => setOpen(!open)}
              className="flex h-[25px] w-full items-center rounded-t-[2px] border border-white bg-linear-to-r from-[#3d8de8] to-[#9cc9ff] pr-[3px] font-bold text-white"
            >
              <span className="flex flex-1 items-center justify-center gap-[5px]">
                <FixedColorIcon />
                Analysis feature parameters
              </span>
              <span className="flex size-[14px] items-center justify-center rounded-full bg-white text-[#3465a4]">
                <ChevronsUp className={open ? "size-3" : "size-3 rotate-180"} strokeWidth={2} />
              </span>
            </button>
            {open && (
              <div className="px-3 pb-3 pt-[9px]">
                <p className="leading-5">Click Add or Remove and select geometric element(s)</p>
                <div className="mt-[5px] grid grid-cols-2 gap-2">
                  {["Add", "Remove"].map((name) => (
                    <button
                      key={name}
                      type="button"
                      aria-pressed={mode === name}
                      onClick={() => setMode(name)}
                      className={`h-8 rounded-[3px] border border-[#b0b0b0] ${
                        mode === name
                          ? "bg-[#cfcfcf]"
                          : "bg-linear-to-b from-[#f4f4f4] to-[#ebebeb]"
                      }`}
                    >
                      {name}
                    </button>
                  ))}
                </div>
                <ul className="mt-[7px] h-[257px] rounded-[3px] border border-[#b0b0b0] bg-white px-[3px] pt-[2px]">
                  <li className="leading-5">Pad001:Face2</li>
                </ul>
              </div>
            )}
          </div>
        </div>
      </section>
    </aside>
  );
};

const DocumentTabs = () => (
  <div className="flex h-[30px] border-t border-[#c2c2c2]">
    <div className="flex h-[29px] w-[98px] items-center rounded-b-[2px] bg-[#bebebe] pl-[9px]">
      <StartIcon />
      <button type="button" className="ml-[9px]">
        Start
      </button>
      <button type="button" aria-label="Close Start" className="ml-auto mr-[9px] text-[#777777]">
        <X className="size-[14px]" strokeWidth={1.5} />
      </button>
    </div>
    <div className="flex h-[29px] w-[157px] items-center rounded-b-[2px] border-x border-b-[3px] border-x-[#b8b8b8] border-b-[#4488d8] bg-[#efefef] pl-[8px] pt-[2px]">
      <DocumentIcon />
      <button type="button" className="ml-[9px]">
        Unnamed : 1*
      </button>
      <button type="button" aria-label="Close Unnamed" className="ml-auto mr-[8px] text-[#777777]">
        <X className="size-[14px]" strokeWidth={1.5} />
      </button>
    </div>
  </div>
);

const StatusBar = () => (
  <footer className="flex h-[38px] shrink-0 items-center pl-[2px] pr-[5px]">
    <span className="flex-1">
      Preselected: Unnamed.Body.Pad001.Edge10 (-30.00 mm, -13.95 mm, 10.00 mm)
    </span>
    <span>Area: 48.00 cm^2</span>
    <span className="ml-[10px] size-[14px] bg-linear-to-b from-[#5f92cc] to-[#2a5a9c]" />
    <button type="button" className="ml-[57px] flex items-center">
      <svg viewBox="0 0 12 16" className="h-4 w-3" fill="none" stroke="#444444" strokeWidth="1.300" aria-hidden="true">
        <rect x="1.500" y="1.500" width="9" height="13" rx="4" />
        <path d="M6 4v3" />
      </svg>
      <span className="ml-[6px]">CAD</span>
      <ChevronDown className="ml-[18px] size-4 text-[#333333]" strokeWidth={1.5} />
    </button>
    <button type="button" className="ml-[21px] flex items-center">
      255.61 mm x 149.18 mm
      <ChevronDown className="ml-[12px] size-4 text-[#333333]" strokeWidth={1.5} />
    </button>
  </footer>
);

const App = () => {
  return (
    <div className="flex min-h-screen flex-col bg-[#eeeeee] font-['Noto_Sans',sans-serif] text-[14px] leading-5 text-black">
      <MenuBar />
      <StandardToolbar />
      <FemToolbar />
      <div className="flex flex-1">
        <TaskPanel />
        <main className="flex min-w-0 flex-1 flex-col">
          <div className="relative flex-1 overflow-hidden bg-linear-to-b from-[#333365] to-[#9797aa]">
            <Scene />
            <NavCube />
            <AxisCross />
          </div>
          <DocumentTabs />
        </main>
      </div>
      <StatusBar />
    </div>
  );
};

export default App;
